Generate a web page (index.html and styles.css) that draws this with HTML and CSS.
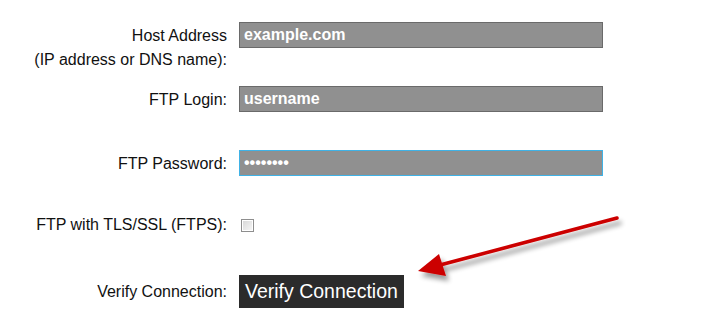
FILE: index.html
```html
<!DOCTYPE html>
<html lang="en">
<head>
  <meta charset="UTF-8">
  <title>FTP Settings</title>
  <link rel="stylesheet" href="styles.css">
</head>
<body>
  <form class="ftp-form" onsubmit="return false;">
    <div class="row row-host">
      <label class="label" for="host">Host Address<br>(IP address or DNS name):</label>
      <input class="field" type="text" id="host" value="example.com">
    </div>

    <div class="row row-login">
      <label class="label" for="login">FTP Login:</label>
      <input class="field" type="text" id="login" value="username">
    </div>

    <div class="row row-pass">
      <label class="label" for="pass">FTP Password:</label>
      <input class="field active" type="password" id="pass" value="password" autofocus>
    </div>

    <div class="row row-tls">
      <label class="label" for="tls">FTP with TLS/SSL (FTPS):</label>
      <input class="check" type="checkbox" id="tls">
    </div>

    <div class="row row-verify">
      <span class="label">Verify Connection:</span>
      <button class="verify-btn" type="button">Verify Connection</button>
    </div>
  </form>

  <!-- annotation arrow -->
  <svg class="arrow" width="230" height="80" viewBox="0 0 230 80">
    <defs>
      <filter id="shadow" x="-20%" y="-50%" width="140%" height="200%">
        <feGaussianBlur in="SourceAlpha" stdDeviation="2.5"/>
        <feOffset dx="3" dy="5" result="blur"/>
        <feComponentTransfer><feFuncA type="linear" slope="0.4"/></feComponentTransfer>
        <feMerge><feMergeNode/><feMergeNode in="SourceGraphic"/></feMerge>
      </filter>
    </defs>
    <g filter="url(#shadow)">
      <line x1="207" y1="8" x2="30" y2="55" stroke="#cc0000" stroke-width="3.5" stroke-linecap="round"/>
      <polygon points="8,61 29,44 36,66" fill="#cc0000"/>
    </g>
  </svg>
</body>
</html>
```

FILE: styles.css
```css
body { margin: 0; font-family: "Liberation Sans", Arial, sans-serif; background: #fff; color: #111; }

.ftp-form { display: flex; flex-direction: column; padding-top: 22px; }
.row { display: flex; align-items: flex-start; }
.row-login { margin-top: 14px; }
.row-pass { margin-top: 38px; }
.row-tls { margin-top: 35px; }
.row-verify { margin-top: 38px; align-items: center; }

.label {
  width: 227px;
  margin-right: 12px;
  text-align: right;
  font-size: 16px;
  line-height: 24px;
  padding-top: 2px;
}
.row-verify .label { padding-top: 0; }

.field {
  box-sizing: border-box;
  width: 364px;
  height: 26px;
  margin: 0;
  padding: 0 4px;
  border: 1px solid #6a6a6a;
  background: #909090;
  color: #fff;
  font-family: "Liberation Sans", Arial, sans-serif;
  font-weight: bold;
  font-size: 16px;
  outline: none;
  caret-color: #fff;
}
.field.active { border-color: #3fb2e6; }

.check {
  appearance: none;
  box-sizing: border-box;
  width: 13px;
  height: 13px;
  margin: 8px 0 0 2px;
  border: 1px solid #8e8e8e;
  background: linear-gradient(135deg, #d6d6d6, #f8f8f8);
  box-shadow: inset 0 0 0 1px #fff;
}

.verify-btn {
  height: 33px;
  padding: 0 6px;
  border: none;
  background: #2b2b2b;
  color: #fff;
  font-family: "Liberation Sans", Arial, sans-serif;
  font-size: 19.5px;
  cursor: pointer;
}

.arrow { position: absolute; left: 410px; top: 210px; }
```
